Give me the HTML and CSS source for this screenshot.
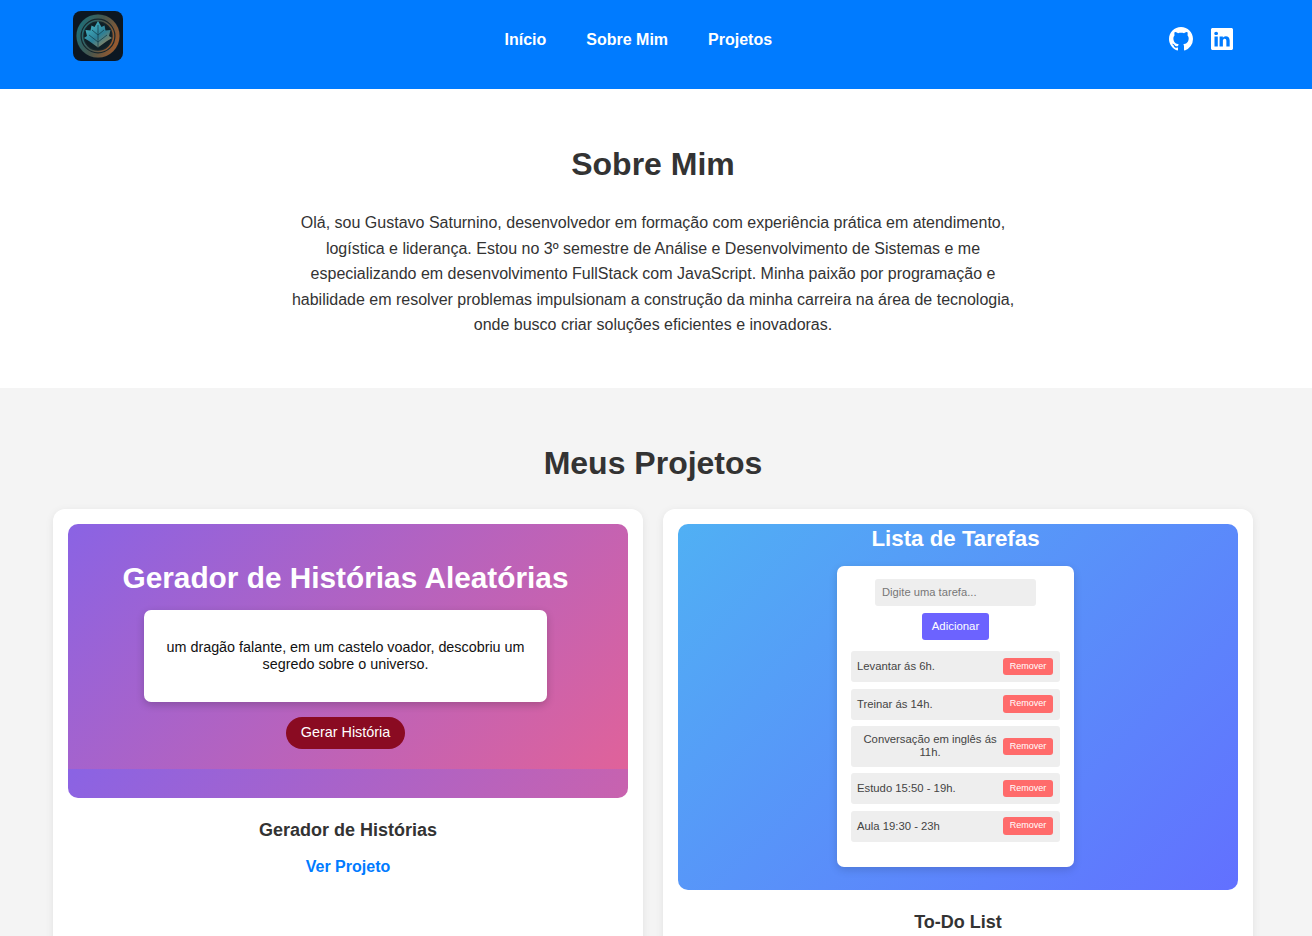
FILE: index.html
```html
<!DOCTYPE html>
<html lang="pt-BR">
<head>
<meta charset="utf-8">
<title>Gustavo Saturnino</title>
<link rel="stylesheet" href="styles.css">
</head>
<body>
<header class="header">
  <a class="logo" href="#" aria-label="Logo">
    <svg viewBox="0 0 50 50" width="50" height="50">
      <defs>
        <linearGradient id="ring" x1="0" y1="0.2" x2="1" y2="0.6">
          <stop offset="0" stop-color="#1f6f78"/>
          <stop offset="0.5" stop-color="#46564e"/>
          <stop offset="1" stop-color="#95592f"/>
        </linearGradient>
        <linearGradient id="leaf" x1="0.1" y1="0" x2="0.9" y2="1">
          <stop offset="0" stop-color="#4cc0cf"/>
          <stop offset="0.55" stop-color="#2c7f96"/>
          <stop offset="1" stop-color="#a98450"/>
        </linearGradient>
      </defs>
      <circle cx="25" cy="25" r="22" fill="#17262c"/>
      <circle cx="25" cy="25" r="19.5" fill="none" stroke="url(#ring)" stroke-width="4"/>
      <circle cx="25" cy="25" r="15.500" fill="none" stroke="url(#ring)" stroke-width="1.600"/>
      <circle cx="25" cy="25" r="13.500" fill="#0f2027"/>
      <path d="M25 10l3.500 6 3-1.500 1 5 5-.5-1.500 6 3 2-5 3-9 6.500-9-6.500-5-3 3-2-1.500-6 5 .5 1-5 3 1.500z" fill="url(#leaf)"/>
      <path d="M25 14v23M25 24l-6-5M25 24l6-5M25 31l-9-7M25 31l9-7" fill="none" stroke="#14404e" stroke-width="0.800"/>
    </svg>
  </a>
  <nav class="nav">
    <a href="#">Início</a>
    <a href="#">Sobre Mim</a>
    <a href="#">Projetos</a>
  </nav>
  <div class="social">
    <a href="#" aria-label="GitHub">
      <svg viewBox="0 0 16 16" width="24" height="24" fill="#fff"><path d="M8 0C3.58 0 0 3.58 0 8c0 3.54 2.29 6.53 5.47 7.59.4.07.55-.17.55-.38 0-.19-.01-.82-.01-1.49-2.01.37-2.53-.49-2.69-.94-.09-.23-.48-.94-.82-1.13-.28-.15-.68-.52-.01-.53.63-.01 1.08.58 1.23.82.72 1.21 1.87.87 2.33.66.07-.52.28-.87.51-1.07-1.78-.2-3.64-.89-3.64-3.95 0-.87.31-1.59.82-2.15-.08-.2-.36-1.02.08-2.12 0 0 .67-.21 2.2.82.64-.18 1.32-.27 2-.27s1.36.09 2 .27c1.53-1.04 2.2-.82 2.2-.82.44 1.1.16 1.92.08 2.12.51.56.82 1.27.82 2.15 0 3.07-1.87 3.75-3.65 3.95.29.25.54.73.54 1.48 0 1.07-.01 1.93-.01 2.2 0 .21.15.46.55.38A8.01 8.01 0 0 0 16 8c0-4.42-3.58-8-8-8z"/></svg>
    </a>
    <a href="#" aria-label="LinkedIn">
      <svg viewBox="0 0 16 16" width="22" height="22" fill="#fff"><path d="M0 1.15C0 .51.53 0 1.18 0h13.64C15.47 0 16 .51 16 1.15v13.7c0 .64-.53 1.15-1.18 1.15H1.18C.53 16 0 15.49 0 14.85V1.15zm4.94 12.24V6.17H2.542v7.22H4.94zM3.74 5.18c.84 0 1.36-.55 1.36-1.25-.015-.71-.52-1.25-1.34-1.25-.82 0-1.36.54-1.36 1.25 0 .7.52 1.25 1.325 1.25h.015zm4.908 8.21V9.36c0-.22.016-.43.08-.59.173-.43.568-.88 1.232-.88.869 0 1.216.66 1.216 1.63v3.87h2.401V9.25c0-2.22-1.184-3.25-2.764-3.25-1.274 0-1.845.7-2.165 1.19v.03h-.016l.016-.03V6.17H6.248c.03.68 0 7.22 0 7.22h2.4z"/></svg>
    </a>
  </div>
</header>

<section class="about">
  <h2 class="section-title">Sobre Mim</h2>
  <p class="about-text">Olá, sou Gustavo Saturnino, desenvolvedor em formação com experiência prática em atendimento, logística e liderança. Estou no 3º semestre de Análise e Desenvolvimento de Sistemas e me especializando em desenvolvimento FullStack com JavaScript. Minha paixão por programação e habilidade em resolver problemas impulsionam a construção da minha carreira na área de tecnologia, onde busco criar soluções eficientes e inovadoras.</p>
</section>

<section class="projects">
  <h2 class="section-title">Meus Projetos</h2>
  <div class="grid">
    <article class="card">
      <div class="shot shot-story">
        <h1 class="story-title">Gerador de Histórias Aleatórias</h1>
        <div class="story-box">um dragão falante, em um castelo voador, descobriu um segredo sobre o universo.</div>
        <span class="story-btn">Gerar História</span>
      </div>
      <h3 class="card-title">Gerador de Histórias</h3>
      <a class="card-link" href="#">Ver Projeto</a>
    </article>
    <article class="card">
      <div class="shot shot-todo">
        <h1 class="todo-title">Lista de Tarefas</h1>
        <div class="todo-panel">
          <div class="todo-input">Digite uma tarefa...</div>
          <span class="todo-add">Adicionar</span>
          <ul class="todo-list">
            <li class="todo-item"><span class="todo-text">Levantar ás 6h.</span><span class="todo-remove">Remover</span></li>
            <li class="todo-item"><span class="todo-text">Treinar ás 14h.</span><span class="todo-remove">Remover</span></li>
            <li class="todo-item"><span class="todo-text todo-wrap">Conversação em inglês ás 11h.</span><span class="todo-remove">Remover</span></li>
            <li class="todo-item"><span class="todo-text">Estudo 15:50 - 19h.</span><span class="todo-remove">Remover</span></li>
            <li class="todo-item"><span class="todo-text">Aula 19:30 - 23h</span><span class="todo-remove">Remover</span></li>
          </ul>
        </div>
      </div>
      <h3 class="card-title">To-Do List</h3>
      <a class="card-link" href="#">Ver Projeto</a>
    </article>
  </div>
</section>
</body>
</html>
```
FILE: styles.css
```css
* { box-sizing: border-box; }
html { overflow: hidden; height: 100%; }
body {
  margin: 0;
  font-family: "Liberation Sans", Arial, sans-serif;
  color: #333;
  background: #f4f4f4;
}
a { text-decoration: none; }

.header {
  height: 89px;
  background: #007bff;
  padding: 11px 79px 0 73px;
  display: flex;
  align-items: flex-start;
}
.logo {
  display: block;
  flex: none;
  width: 50px;
  height: 50px;
  background: #0c1722;
  border-radius: 8px;
  overflow: hidden;
}
.logo svg { display: block; }
.nav {
  display: flex;
  gap: 40px;
  height: 57px;
  align-items: center;
  margin-left: 381.5px;
}
.nav a { color: #fff; font-weight: 700; font-size: 16px; }
.social {
  display: flex;
  gap: 18px;
  height: 56px;
  align-items: center;
  margin-left: auto;
}
.social a { display: block; height: 24px; }
.social a:last-child { height: 22px; }
.social svg { display: block; }

.about {
  background: #fff;
  height: 299px;
  padding: 57px 6px 0 0;
  text-align: center;
}
.section-title {
  margin: 0;
  font-size: 32px;
  line-height: 37px;
  font-weight: 700;
  color: #333;
}
.about-text {
  width: 760px;
  margin: 27px auto 0;
  font-size: 16px;
  line-height: 25.6px;
}

.projects {
  padding: 57px 6px 0 0;
  text-align: center;
}
.grid {
  width: 1200px;
  margin: 27px auto 0;
  display: grid;
  grid-template-columns: 590px 590px;
  gap: 20px;
}
.card {
  background: #fff;
  border-radius: 12px;
  padding: 15px 15px 40px;
  box-shadow: 0 2px 8px rgba(0, 0, 0, 0.08);
}
.shot {
  width: 560px;
  border-radius: 10px;
  overflow: hidden;
  display: flex;
  flex-direction: column;
  align-items: center;
}
.shot-story {
  height: 274px;
  background-image: linear-gradient(135deg, #8a63e4, #e0629a);
  background-size: 100% 245px;
  padding: 37px 5px 0 0;
}
.story-title {
  margin: 0;
  color: #fff;
  font-size: 29.8px;
  line-height: 34px;
  font-weight: 700;
}
.story-box {
  width: 403px;
  height: 92px;
  margin-top: 15px;
  padding: 0 20px;
  background: #fff;
  border-radius: 7px;
  box-shadow: 0 3px 8px rgba(0, 0, 0, 0.2);
  color: #111;
  font-size: 14.35px;
  line-height: 17px;
  display: flex;
  align-items: center;
  justify-content: center;
}
.story-btn {
  margin-top: 15px;
  width: 119px;
  height: 32px;
  line-height: 31px;
  background: #8a0b22;
  border-radius: 16px;
  color: #fff;
  font-size: 14.4px;
}
.shot-todo {
  height: 366px;
  background: linear-gradient(135deg, #50b0f4, #6270ff);
  padding-top: 2px;
  padding-right: 5px;
}
.todo-title {
  margin: 0;
  color: #fff;
  font-size: 22.3px;
  line-height: 26px;
  font-weight: 700;
}
.todo-panel {
  width: 237px;
  height: 301px;
  margin-top: 14px;
  padding: 13px 14px 0;
  background: #fff;
  border-radius: 7px;
  box-shadow: 0 3px 8px rgba(0, 0, 0, 0.14);
  display: flex;
  flex-direction: column;
  align-items: center;
}
.todo-input {
  width: 161px;
  height: 27px;
  padding-left: 7px;
  background: #eee;
  border-radius: 3px;
  color: #777;
  font-size: 11.2px;
  line-height: 27px;
  text-align: left;
}
.todo-add {
  width: 67px;
  height: 27px;
  margin-top: 7px;
  background: #6c63ff;
  border-radius: 3px;
  color: #fff;
  font-size: 11.4px;
  line-height: 26px;
}
.todo-list {
  list-style: none;
  width: 209px;
  margin: 11px 0 0;
  padding: 0;
  display: flex;
  flex-direction: column;
  gap: 6.5px;
}
.todo-item {
  min-height: 31px;
  padding: 0 7px 0 6px;
  background: #eee;
  border-radius: 3px;
  display: flex;
  align-items: center;
  font-size: 11.3px;
  line-height: 13px;
  color: #444;
}
.todo-text { flex: 1; text-align: left; }
.todo-wrap { text-align: center; padding: 7.25px 0; }
.todo-remove {
  flex: none;
  width: 50px;
  height: 17.5px;
  background: #ff6b6b;
  border-radius: 3px;
  color: #fff;
  font-size: 9px;
  line-height: 17px;
  text-align: center;
}
.card-title {
  margin: 22px 0 0;
  font-size: 18px;
  line-height: 21px;
  font-weight: 700;
  color: #333;
}
.card-link {
  display: block;
  margin-top: 17px;
  color: #007bff;
  font-size: 16px;
  line-height: 18px;
  font-weight: 700;
}
```
